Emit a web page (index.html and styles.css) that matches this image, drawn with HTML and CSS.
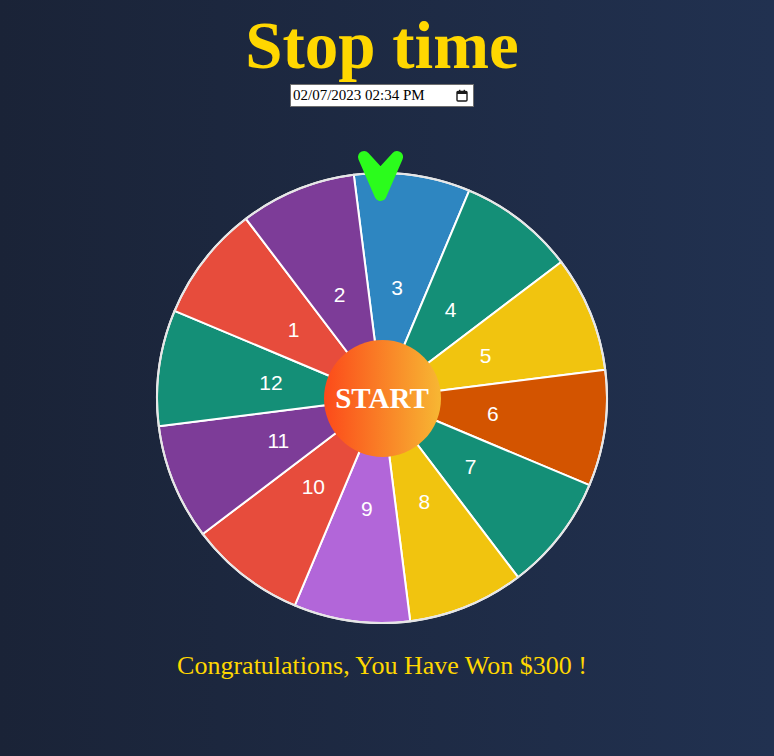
FILE: index.html
```html
<!DOCTYPE html>
<html lang="en">
<head>
<meta charset="utf-8">
<title>Stop time</title>
<link rel="stylesheet" href="styles.css">
</head>
<body>
<main class="app">
  <h1 class="title">Stop time</h1>
  <label class="date-field">
    <input class="date-text" type="text" value="02/07/2023 02:34 PM" aria-label="Stop time">
    <svg class="cal-icon" width="12" height="13" viewBox="0 0 12 13" xmlns="http://www.w3.org/2000/svg">
      <rect x="1" y="2.5" width="10" height="9.5" rx="1" fill="none" stroke="#1a1a1a" stroke-width="1.4"/>
      <rect x="1" y="2.5" width="10" height="2.5" fill="#1a1a1a"/>
      <rect x="3" y="0.8" width="1.4" height="2.5" fill="#1a1a1a"/>
      <rect x="7.6" y="0.8" width="1.4" height="2.5" fill="#1a1a1a"/>
    </svg>
  </label>
  <div class="wheel-wrap">
    <svg class="wheel" width="460" height="460" viewBox="0 0 460 460" xmlns="http://www.w3.org/2000/svg">
      <g class="segments" stroke="#ffffff" stroke-width="2" stroke-linejoin="round">
        <path fill="#2e86c1" d="M230 230 L201.80 6.78 A225 225 0 0 1 317.19 22.58 Z"/>
        <path fill="#148f77" d="M230 230 L317.19 22.58 A225 225 0 0 1 409.22 93.96 Z"/>
        <path fill="#f1c40f" d="M230 230 L409.22 93.96 A225 225 0 0 1 453.22 201.80 Z"/>
        <path fill="#d35400" d="M230 230 L453.22 201.80 A225 225 0 0 1 437.42 317.19 Z"/>
        <path fill="#148f77" d="M230 230 L437.42 317.19 A225 225 0 0 1 366.04 409.22 Z"/>
        <path fill="#f1c40f" d="M230 230 L366.04 409.22 A225 225 0 0 1 258.20 453.22 Z"/>
        <path fill="#b266d9" d="M230 230 L258.20 453.22 A225 225 0 0 1 142.81 437.42 Z"/>
        <path fill="#e74c3c" d="M230 230 L142.81 437.42 A225 225 0 0 1 50.78 366.04 Z"/>
        <path fill="#7d3c98" d="M230 230 L50.78 366.04 A225 225 0 0 1 6.78 258.20 Z"/>
        <path fill="#148f77" d="M230 230 L6.78 258.20 A225 225 0 0 1 22.58 142.81 Z"/>
        <path fill="#e74c3c" d="M230 230 L22.58 142.81 A225 225 0 0 1 93.96 50.78 Z"/>
        <path fill="#7d3c98" d="M230 230 L93.96 50.78 A225 225 0 0 1 201.80 6.78 Z"/>
      </g>
      <circle cx="230" cy="230" r="225" fill="none" stroke="#e6e6e6" stroke-width="2"/>
      <g class="labels">
        <text x="245.20" y="119.04">3</text>
        <text x="298.65" y="141.50">4</text>
        <text x="333.70" y="187.68">5</text>
        <text x="340.96" y="245.20">6</text>
        <text x="318.50" y="298.65">7</text>
        <text x="272.32" y="333.70">8</text>
        <text x="214.80" y="340.96">9</text>
        <text x="161.35" y="318.50">10</text>
        <text x="126.30" y="272.32">11</text>
        <text x="119.04" y="214.80">12</text>
        <text x="141.50" y="161.35">1</text>
        <text x="187.68" y="126.30">2</text>
      </g>
    </svg>
    <svg class="pointer" width="60" height="60" viewBox="0 0 60 60" xmlns="http://www.w3.org/2000/svg">
      <path d="M12 12 L28.5 30 L45 12 L28.5 50 Z" fill="#2bfc1c" stroke="#2bfc1c" stroke-width="12" stroke-linejoin="round"/>
    </svg>
    <button class="start-btn" type="button">START</button>
  </div>
  <p class="result">Congratulations, You Have Won $300 !</p>
</main>
</body>
</html>
```

FILE: styles.css
```css
html, body {
  margin: 0;
  padding: 0;
}

body {
  min-height: 100vh;
  background: linear-gradient(to right, #1a2337, #213150);
  font-family: "Liberation Serif", "Times New Roman", serif;
}

.app {
  width: 764px;
  display: flex;
  flex-direction: column;
  align-items: center;
}

.title {
  margin: 12px 0 0;
  font-size: 67px;
  line-height: 67px;
  font-weight: 700;
  color: #ffd700;
}

.date-field {
  margin-top: 5px;
  box-sizing: border-box;
  width: 184px;
  height: 23px;
  display: flex;
  align-items: center;
  gap: 4px;
  padding: 0 5px 0 2px;
  background: #ffffff;
  border: 1px solid #6e6e6e;
}

.date-text {
  flex: 1;
  min-width: 0;
  border: none;
  outline: none;
  padding: 0;
  margin: 0;
  background: transparent;
  font-family: "Liberation Serif", "Times New Roman", serif;
  font-size: 15px;
  color: #000000;
}

.cal-icon {
  display: block;
  flex: none;
}

.wheel-wrap {
  position: relative;
  width: 460px;
  height: 460px;
  margin-top: 61px;
}

.wheel {
  display: block;
}

.labels text {
  font-family: "Liberation Sans", Arial, sans-serif;
  font-size: 21px;
  fill: #ffffff;
  text-anchor: middle;
  dominant-baseline: central;
}

.pointer {
  position: absolute;
  left: 200px;
  top: -23px;
}

.start-btn {
  position: absolute;
  left: 171.5px;
  top: 171.5px;
  width: 117px;
  height: 117px;
  border: none;
  border-radius: 50%;
  padding: 0;
  background: linear-gradient(to right, #fc4a1a, #f7b733);
  color: #ffffff;
  font-family: "Liberation Serif", "Times New Roman", serif;
  font-weight: 700;
  font-size: 29px;
  cursor: pointer;
}

.result {
  margin: 23px 0 0;
  font-size: 26px;
  line-height: 30px;
  color: #ffd700;
}
```
